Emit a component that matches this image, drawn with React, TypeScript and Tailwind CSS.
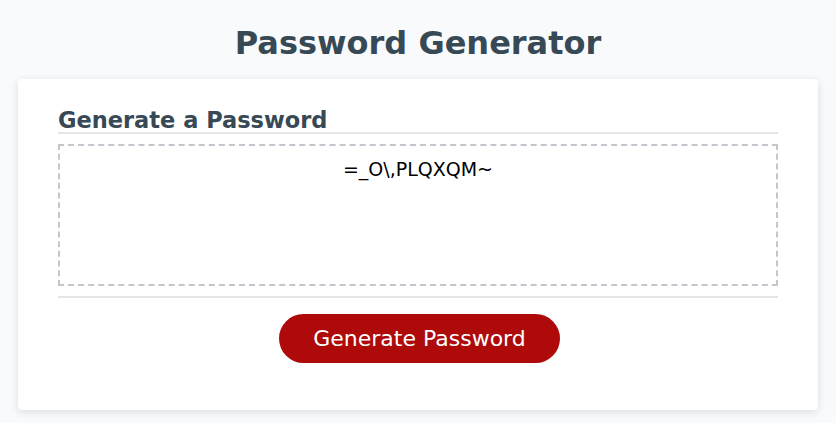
export default function App() {
  const password = "=_O\\,PLQXQM~";

  return (
    <div className="min-h-[423px] bg-[#f9fafb] pt-[24px] font-['DejaVu_Sans',sans-serif]">
      <h1 className="text-center text-[32px] leading-[38px] font-bold text-[#384956] mb-[17px]">
        Password Generator
      </h1>

      <div className="mx-[18px] bg-white rounded-[4px] shadow-[0_2px_8px_rgba(0,0,0,0.12)] px-10 pt-[29px] pb-[47px]">
        <h2 className="text-[22.5px] leading-[24px] font-bold text-[#384956] border-b-2 border-[#e6e6e6]">
          Generate a Password
        </h2>

        <div className="mt-[10px] h-[142px] border-2 border-dashed border-[#c3c6cc] pt-[12px] text-center text-[19px] leading-[22px] text-black">
          {password}
        </div>

        <div className="mt-[10px] border-t-2 border-[#e6e6e6]" />

        <div className="mt-[16px] flex justify-center pl-[3px]">
          <button className="h-[49px] w-[281px] rounded-full bg-[#ae0a0a] text-[22px] leading-[25px] text-white">
            Generate Password
          </button>
        </div>
      </div>
    </div>
  );
}
